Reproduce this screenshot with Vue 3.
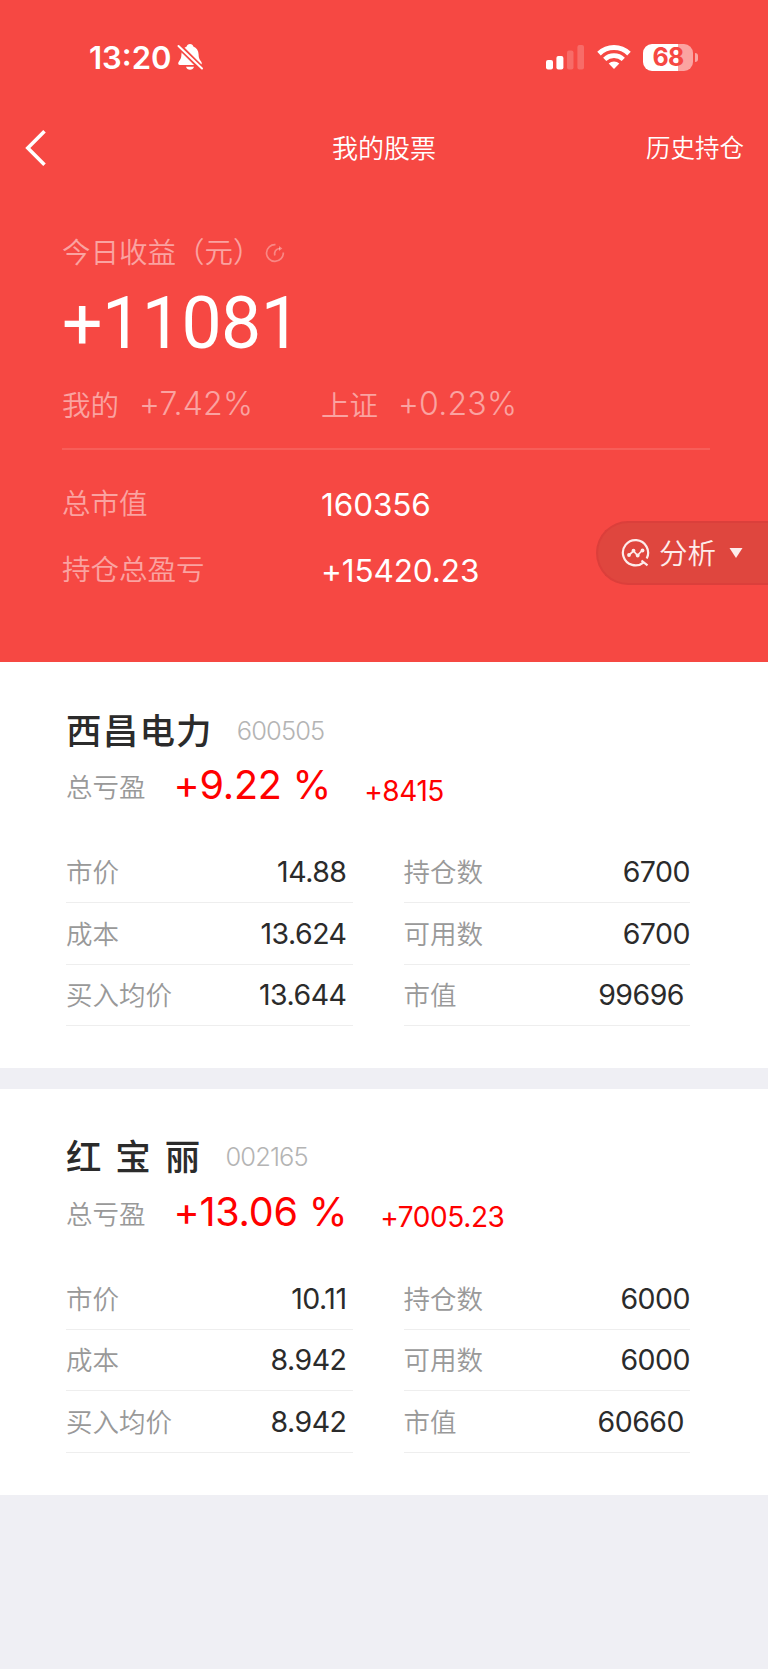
<script setup>
  import {reactive} from 'vue'

  const stocks = reactive([
    {
      name: '西昌电力', code: '600505', rate: '+9.22 %', profit: '+8415',
      left: [
        {label: '市价', value: '14.88'},
        {label: '成本', value: '13.624'},
        {label: '买入均价', value: '13.644'},
      ],
      right: [
        {label: '持仓数', value: '6700'},
        {label: '可用数', value: '6700'},
        {label: '市值', value: '99696'},
      ],
    },
    {
      name: '红 宝 丽', code: '002165', rate: '+13.06 %', profit: '+7005.23',
      left: [
        {label: '市价', value: '10.11'},
        {label: '成本', value: '8.942'},
        {label: '买入均价', value: '8.942'},
      ],
      right: [
        {label: '持仓数', value: '6000'},
        {label: '可用数', value: '6000'},
        {label: '市值', value: '60660'},
      ],
    },
  ])
</script>

<template>
  <div class="page">
    <header class="hero">
      <div class="statusBar">
        <span class="time">13:20</span>
        <svg class="bell" width="28" height="28" viewBox="0 0 28 28">
          <path d="M14 1c1.900 0 3 1 3.300 2.500 3.400 1.300 5.200 4.300 5.300 8 .1 4 1.200 5.300 2.500 7 1.300 1.700.7 3.500-1.100 3.500H4c-1.800 0-2.400-1.800-1.100-3.500 1.300-1.700 2.400-3 2.500-7 .1-3.700 1.900-6.700 5.300-8C11 2 12.100 1 14 1z" fill="#fff" />
          <path d="M10 23.800h8c-.5 1.900-2 3-4 3s-3.500-1.100-4-3z" fill="#fff" />
          <path d="M1 1l26 26" stroke="#f64843" stroke-width="5.500" />
          <path d="M2.500 3l23.500 22.500" stroke="#fff" stroke-width="2" stroke-linecap="round" />
        </svg>
        <div class="indicators">
          <svg width="39" height="26" viewBox="0 0 39 26" fill="#fff">
            <rect x="0" y="16" width="7" height="9.500" rx="2" />
            <rect x="10.400" y="12" width="7" height="13.500" rx="2" />
            <rect x="21" y="6.500" width="6.500" height="19" rx="2" opacity=".2" />
            <rect x="31.400" y="1" width="6.600" height="24.500" rx="2" opacity=".2" />
          </svg>
          <svg class="wifi" width="34" height="26" viewBox="0 0 34 26" fill="none" stroke="#fff" stroke-width="5">
            <path d="M2 9.600a21.500 21.500 0 0 1 30 0" />
            <path d="M7.700 15.300a13.500 13.500 0 0 1 18.600 0" stroke-width="4.600" />
            <path d="M11.700 19.600a7.600 7.600 0 0 1 10.600 0L17 25z" fill="#fff" stroke="none" />
          </svg>
          <div class="battery">
            <span class="batteryText">68</span>
          </div>
          <span class="batteryTip"></span>
        </div>
      </div>

      <nav class="navBar">
        <svg class="back" width="22" height="38" viewBox="0 0 22 38">
          <path d="M20.500 2.300L3.800 19l16.700 16.700" fill="none" stroke="#fff" stroke-width="3.600" />
        </svg>
        <span class="navTitle">我的股票</span>
        <span class="navLink">历史持仓</span>
      </nav>

      <section class="summary">
        <div class="todayLabel">
          <span>今日收益（元）</span>
          <svg width="20" height="20" viewBox="0 0 20 20" fill="none" stroke="#fff" stroke-opacity=".35" stroke-width="1.700">
            <path d="M10.500 1.600A8.400 8.400 0 1 0 18.300 9.500" />
            <path d="M9.800 12.500c-.8-3.800.8-6.800 5.200-7" />
            <path d="M14 3l3.400 2.500L14 8z" fill="#fff" fill-opacity=".35" stroke="none" />
          </svg>
        </div>
        <div class="todayValue">+11081</div>
        <div class="rates">
          <div class="rate"><span>我的</span><span class="rateNum">+7.42%</span></div>
          <div class="rate"><span>上证</span><span class="rateNum">+0.23%</span></div>
        </div>
        <div class="total first"><span>总市值</span><span class="totalNum">160356</span></div>
        <div class="total"><span>持仓总盈亏</span><span class="totalNum">+15420.23</span></div>
      </section>

      <button class="analyse">
        <svg width="30" height="30" viewBox="0 0 30 30" fill="none" stroke="#fdeceb" stroke-width="2.200">
          <path d="M22.700 24.300a12.600 12.600 0 1 1 3-3.800" />
          <path d="M20.500 22.500l6 4.800" />
          <path d="M8 17l4.500-4 4 4.500 5-5.500" stroke-width="1.700" />
          <g fill="#fdeceb" stroke="none">
            <circle cx="8" cy="17" r="1.900" />
            <circle cx="12.500" cy="12.700" r="1.900" />
            <circle cx="16.700" cy="17.500" r="1.900" />
            <circle cx="21.500" cy="12.500" r="1.900" />
          </g>
        </svg>
        <span class="analyseText">分析</span>
        <svg width="14" height="10" viewBox="0 0 14 10"><path d="M.5 0h13L7 10z" fill="#fdeceb" /></svg>
      </button>
    </header>

    <section v-for="stock in stocks" :key="stock.code" class="card">
      <div class="stockHead">
        <span class="stockName">{{stock.name}}</span>
        <span class="stockCode">{{stock.code}}</span>
      </div>
      <div class="stockProfit">
        <span class="profitLabel">总亏盈</span>
        <span class="profitRate">{{stock.rate}}</span>
        <span class="profitNum">{{stock.profit}}</span>
      </div>
      <div class="columns">
        <ul class="column">
          <li v-for="item in stock.left" :key="item.label"><span>{{item.label}}</span><b>{{item.value}}</b></li>
        </ul>
        <ul class="column rightColumn">
          <li v-for="item in stock.right" :key="item.label"><span>{{item.label}}</span><b>{{item.value}}</b></li>
        </ul>
      </div>
    </section>
  </div>
</template>

<style>
body {
  background: #efeff4;
}
</style>

<style scoped>
.page {
  width: 768px;
  height: 1669px;
  overflow: hidden;
  background: #efeff4;
  font-family: Inter, "Noto Sans CJK SC", sans-serif;
  font-weight: 350;
  white-space: nowrap;
}

.hero {
  position: relative;
  height: 662px;
  background: #f64843;
  color: #fff;
}

.statusBar {
  display: flex;
  align-items: center;
  height: 114px;
  padding: 0 70px 0 89px;
}

.time {
  width: 87px;
  font-size: 31px;
  font-weight: 600;
}

.indicators {
  display: flex;
  align-items: center;
  margin-left: auto;
}

.wifi {
  margin: 0 12px 0 12px;
}

.battery {
  width: 50px;
  height: 27px;
  border-radius: 9px;
  background: linear-gradient(to right, #fff 35px, #fba4a1 35px);
  line-height: 27px;
  text-align: center;
}

.batteryText {
  color: #f64843;
  font-size: 25px;
  font-weight: 700;
  letter-spacing: -0.8px;
}

.batteryTip {
  width: 3px;
  height: 9px;
  margin-left: 2px;
  border-radius: 0 5px 5px 0;
  background: #fba4a1;
}

.navBar {
  display: grid;
  grid-template-columns: 1fr auto 1fr;
  align-items: center;
  height: 68px;
  padding: 0 24px;
}

.navTitle {
  padding-bottom: 3px;
  font-size: 26px;
}

.navLink {
  justify-self: end;
  padding-bottom: 3px;
  font-size: 24.5px;
}

.summary {
  padding: 43px 58px 0 62px;
  color: rgba(255, 255, 255, 0.5);
  font-size: 28.5px;
}

.todayLabel {
  display: flex;
  align-items: center;
  height: 50px;
}

.todayLabel svg {
  margin: 6px 0 0 3px;
}

.todayValue {
  height: 93px;
  color: #fff;
  font-family: Roboto, sans-serif;
  font-size: 71.5px;
  font-weight: 400;
  line-height: 98px;
  letter-spacing: -0.5px;
}

.rates {
  display: flex;
  height: 80px;
  border-bottom: 2px solid rgba(255, 255, 255, 0.12);
}

.rate {
  display: flex;
  align-items: center;
  width: 259px;
  height: 70px;
}

.rateNum {
  margin: 1px 0 0 20px;
  font-size: 32px;
  letter-spacing: 0.2px;
}

.total {
  display: flex;
  align-items: center;
  height: 66px;
}

.first {
  margin-top: 18px;
}

.total span:first-child {
  width: 259px;
}

.totalNum {
  margin-top: 6px;
  color: #fff;
  font-size: 31.5px;
  font-weight: 400;
  letter-spacing: -0.1px;
}

.analyse {
  position: absolute;
  top: 521px;
  right: 0;
  display: flex;
  align-items: center;
  box-sizing: border-box;
  width: 172px;
  height: 64px;
  padding: 0 0 0 23px;
  border: 2px solid #db3f3b;
  border-right: none;
  border-radius: 32px 0 0 32px;
  background: #df463e;
  color: #fdeceb;
  font: inherit;
}

.analyseText {
  margin: 0 13px 4px 8px;
  font-size: 28.5px;
}

.card {
  box-sizing: border-box;
  height: 406px;
  margin-bottom: 20.5px;
  padding: 40px 78px 0 66px;
  background: #fff;
}

.stockHead {
  display: flex;
  align-items: center;
  height: 56px;
}

.stockName {
  padding-bottom: 4px;
  color: #2b2b2b;
  font-size: 35.5px;
  font-weight: 500;
  letter-spacing: 1.2px;
  word-spacing: 2px;
}

.stockCode {
  margin-left: 24px;
  color: #b4b4b4;
  font-size: 25.5px;
  letter-spacing: -0.9px;
}

.stockProfit {
  display: flex;
  align-items: center;
  height: 54px;
}

.profitLabel {
  margin-top: 1px;
  color: #999;
  font-size: 26.5px;
}

.profitRate {
  margin-left: 28px;
  color: #f00;
  font-size: 39.5px;
  font-weight: 400;
  letter-spacing: -0.2px;
}

.profitNum {
  margin: 11px 0 0 33px;
  color: #f00;
  font-size: 28px;
  font-weight: 400;
  letter-spacing: -0.4px;
}

.columns {
  display: flex;
  gap: 51px;
  margin-top: 29.5px;
}

.column {
  width: 286.5px;
  margin: 0;
  padding: 0;
  list-style-type: none;
}

.column li {
  display: flex;
  justify-content: space-between;
  align-items: center;
  box-sizing: border-box;
  height: 61.5px;
  padding-right: 6px;
  border-bottom: 1px solid #eee;
  color: #999;
  font-size: 26.5px;
}

.column span {
  padding-bottom: 2px;
}

.rightColumn li {
  padding-right: 0;
}

.rightColumn li:last-child {
  padding-right: 6px;
}

.column b {
  color: #2b2b2b;
  font-size: 28.5px;
  font-weight: 400;
  letter-spacing: -0.5px;
}
</style>
